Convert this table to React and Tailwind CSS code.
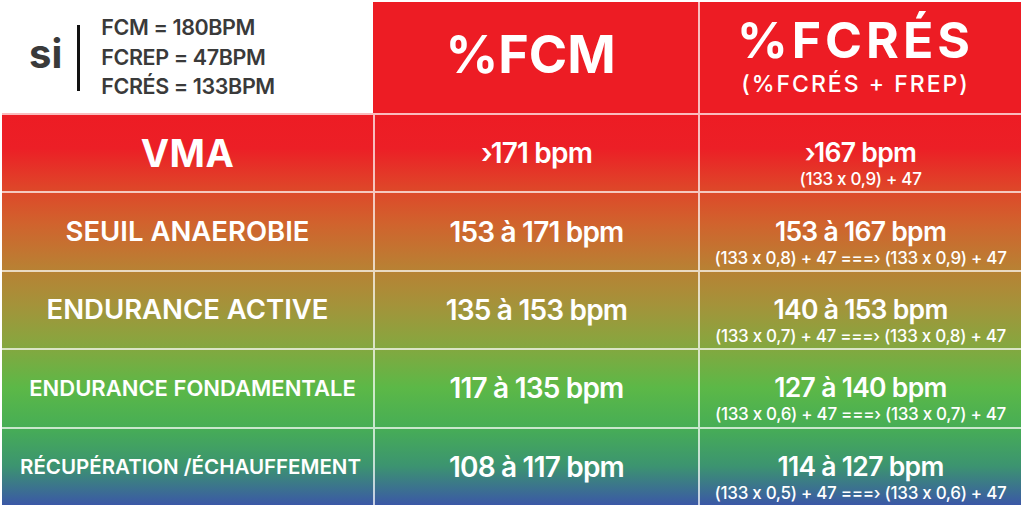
import React from "react";

const rows = [
  {
    label: "VMA",
    labelCls: "text-[38px] font-bold tracking-[0.5px]",
    fcm: "›171 bpm",
    res: "›167 bpm",
    sub: "(133 x 0,9) + 47",
  },
  {
    label: "SEUIL ANAEROBIE",
    labelCls: "text-[27.5px] font-semibold",
    fcm: "153 à 171 bpm",
    res: "153 à 167 bpm",
    sub: "(133 x 0,8) + 47 ===› (133 x 0,9) + 47",
  },
  {
    label: "ENDURANCE ACTIVE",
    labelCls: "text-[27.5px] font-semibold",
    fcm: "135 à 153 bpm",
    res: "140 à 153 bpm",
    sub: "(133 x 0,7) + 47 ===› (133 x 0,8) + 47",
  },
  {
    label: "ENDURANCE FONDAMENTALE",
    labelCls: "text-[22px] font-semibold pl-[10px]",
    fcm: "117 à 135 bpm",
    res: "127 à 140 bpm",
    sub: "(133 x 0,6) + 47 ===› (133 x 0,7) + 47",
  },
  {
    label: "RÉCUPÉRATION /ÉCHAUFFEMENT",
    labelCls: "text-[20.5px] font-semibold pl-[6px]",
    fcm: "108 à 117 bpm",
    res: "114 à 127 bpm",
    sub: "(133 x 0,5) + 47 ===› (133 x 0,6) + 47",
  },
];

export default function App() {
  return (
    <div className="w-[1023px] h-[506px] bg-white px-[2px] pt-[2px] font-['Inter','Liberation_Sans',sans-serif] text-white">
      <div className="flex h-[111px]">
        <div className="w-[371px] flex items-center pl-[27px] text-[#3a3a3a]">
          <div className="text-[40px] font-bold leading-none pb-[8px]">si</div>
          <div className="w-[3px] h-[66px] bg-[#111] ml-[15px] mr-[21px]" />
          <div className="text-[21.5px] font-semibold leading-[29.5px] tracking-[-0.4px]">
            <div>FCM = 180BPM</div>
            <div>FCREP = 47BPM</div>
            <div>FCRÉS = 133BPM</div>
          </div>
        </div>
        <div className="w-[325px] bg-[#ed1c24] flex items-center justify-center pr-[10px] pb-[6px]">
          <div className="text-[52px] font-bold leading-none">%FCM</div>
        </div>
        <div className="flex-1 bg-[#ed1c24] border-l-2 border-white/70 flex flex-col items-center justify-center pt-[2px] pr-[10px]">
          <div className="text-[50px] font-bold leading-[52px] tracking-[4px]">%FCRÉS</div>
          <div className="text-[23px] font-medium leading-[37px] tracking-[2px]">(%FCRÉS + FREP)</div>
        </div>
      </div>
      <div className="h-[392px] flex flex-col bg-[linear-gradient(180deg,#ed1c24_0%,#ec1f26_9%,#df4529_19%,#d1622d_28%,#ba7f33_39%,#a4933a_49%,#87a63f_59%,#5cb847_70%,#47ae55_80%,#3c9470_90%,#3b58a6_100%)]">
        {rows.map((r) => (
          <div key={r.label} className="flex-1 flex border-t-2 border-white/70">
            <div className="w-[371px] flex items-center justify-center">
              <div className={r.labelCls + " leading-none"}>{r.label}</div>
            </div>
            <div className="w-[325px] border-l-2 border-white/70 flex items-center justify-center">
              <div className="text-[28px] font-semibold leading-none tracking-[-0.8px]">
                {r.fcm}
              </div>
            </div>
            <div className="flex-1 border-l-2 border-white/70 flex flex-col items-center justify-center pt-[21px]">
              <div className="text-[26.5px] font-semibold leading-[31px] tracking-[-0.7px]">
                {r.res}
              </div>
              <div className="text-[17px] font-medium leading-[22px] tracking-[-0.3px]">{r.sub}</div>
            </div>
          </div>
        ))}
      </div>
    </div>
  );
}
